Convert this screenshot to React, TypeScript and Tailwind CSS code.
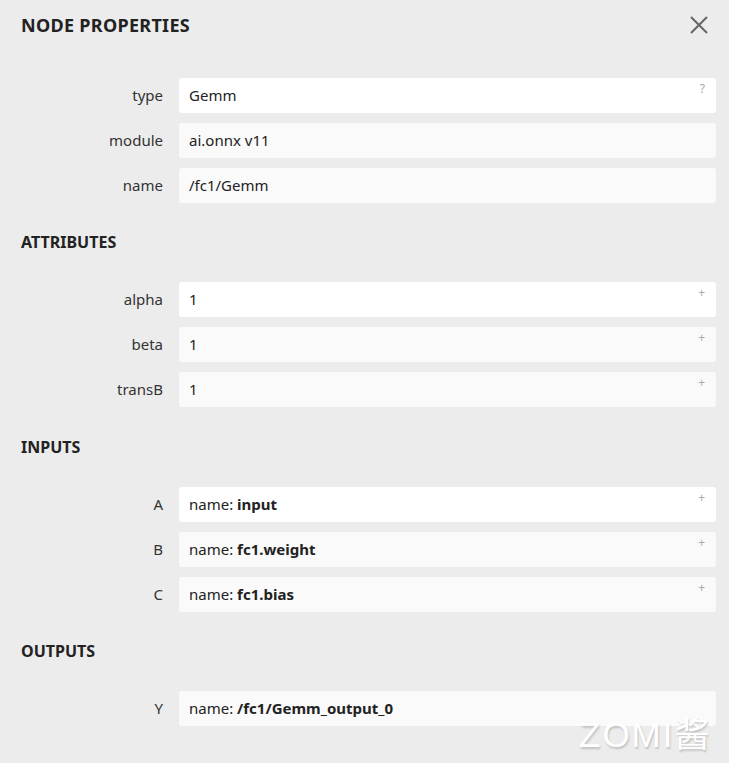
const font = { fontFamily: '"Noto Sans", "Open Sans", sans-serif' };

type Row = { label: string; value: React.ReactNode; mark?: string; bright?: boolean };

const Field = ({ label, value, mark, bright }: Row) => (
  <div className="flex items-center h-[35px]">
    <div className="w-[163px] text-right text-[15px] text-[#333]">{label}</div>
    <div
      className={`relative ml-4 mr-[13px] flex-1 h-[35px] rounded-[3px] flex items-center px-[10px] text-[15px] text-[#222] ${
        bright ? 'bg-white' : 'bg-[#fafafa]'
      }`}
    >
      {value}
      {mark && (
        <span className="absolute right-[11px] top-[5px] text-[12px] leading-none text-[#aaa]">{mark}</span>
      )}
    </div>
  </div>
);

const Heading = ({ children, gap = 'mt-[29px]' }: { children: React.ReactNode; gap?: string }) => (
  <h3 className={`${gap} pl-[21px] h-[20px] leading-[20px] text-[16px] font-bold text-[#222]`}>{children}</h3>
);

const NameValue = ({ name }: { name: string }) => (
  <span>
    name: <b className="font-bold">{name}</b>
  </span>
);

export default function App() {
  return (
    <div className="relative w-[729px] h-[763px] bg-[#ececec] overflow-hidden" style={font}>
      <div className="flex items-center justify-between h-[50px] pl-[21px] pr-[20px]">
        <h2 className="text-[18px] font-bold text-[#222] tracking-[0.3px]">NODE PROPERTIES</h2>
        <svg width="18" height="18" viewBox="0 0 18 18" className="mr-[1px] -mt-[1px]">
          <path d="M1 1 L17 17 M17 1 L1 17" stroke="#666" strokeWidth="2" />
        </svg>
      </div>

      <div className="mt-[28px] flex flex-col gap-[10px]">
        <Field label="type" value="Gemm" mark="?" bright />
        <Field label="module" value="ai.onnx v11" />
        <Field label="name" value="/fc1/Gemm" />
      </div>

      <Heading>ATTRIBUTES</Heading>
      <div className="mt-[30px] flex flex-col gap-[10px]">
        <Field label="alpha" value="1" mark="+" bright />
        <Field label="beta" value="1" mark="+" />
        <Field label="transB" value="1" mark="+" />
      </div>

      <Heading gap="mt-[30px]">INPUTS</Heading>
      <div className="mt-[30px] flex flex-col gap-[10px]">
        <Field label="A" value={<NameValue name="input" />} mark="+" bright />
        <Field label="B" value={<NameValue name="fc1.weight" />} mark="+" />
        <Field label="C" value={<NameValue name="fc1.bias" />} mark="+" />
      </div>

      <Heading>OUTPUTS</Heading>
      <div className="mt-[30px] flex flex-col gap-[10px]">
        <Field label="Y" value={<NameValue name="/fc1/Gemm_output_0" />} />
      </div>

      <div
        className="absolute left-[579px] top-[717px] text-[35px] leading-none text-white tracking-[2px] [text-shadow:1px_2px_2px_rgba(0,0,0,0.18)]"
        style={{ fontFamily: '"Liberation Sans", "Noto Sans CJK SC", sans-serif' }}
      >
        ZOMI酱
      </div>
    </div>
  );
}
